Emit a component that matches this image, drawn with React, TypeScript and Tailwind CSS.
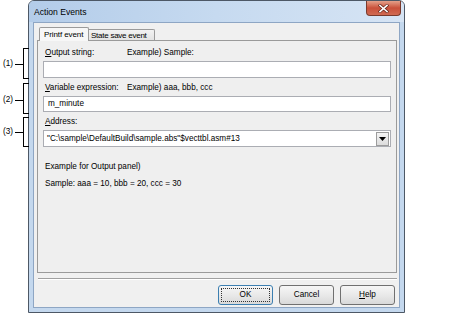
import React from "react";

function Callout({ top, height, tick, label }: { top: number; height: number; tick: number; label: string }) {
  return (
    <>
      <div
        className="absolute left-[23px] w-[6px] border-l border-t border-b border-black"
        style={{ top, height }}
      />
      <div className="absolute left-[15px] w-[8px] h-px bg-black" style={{ top: tick }} />
      <div className="absolute left-[3px] h-[12px] leading-[12px] text-black" style={{ top: tick - 6 }}>
        {label}
      </div>
    </>
  );
}

function Btn({ children, focus }: { children: React.ReactNode; focus?: boolean }) {
  return (
    <div
      className={
        "w-[55px] h-[20px] rounded-[3px] border flex items-center justify-center bg-gradient-to-b from-[#f6f6f6] via-[#e9e9e9] to-[#d9d9d9] " +
        (focus ? "border-[#3c7fb1]" : "border-[#707070]")
      }
    >
      {focus ? (
        <div className="w-[49px] h-[14px] border border-dotted border-[#333] flex items-center justify-center">
          {children}
        </div>
      ) : (
        children
      )}
    </div>
  );
}

export default function App() {
  return (
    <div
      className="relative w-[474px] h-[316px] bg-white overflow-hidden text-[8.2px] leading-[12px] text-black"
      style={{ fontFamily: '"Liberation Sans", Arial, sans-serif' }}
    >
      <Callout top={48} height={31} tick={64} label="(1)" />
      <Callout top={83} height={31} tick={100} label="(2)" />
      <Callout top={117} height={30} tick={132} label="(3)" />

      <div className="ml-[28px] w-[377px] h-[313px] border border-[#4d5866] rounded-t-[6px] bg-[#c4d8ee] flex flex-col">
        {/* title bar */}
        <div className="h-[21px] flex justify-between rounded-t-[5px] bg-gradient-to-r from-[#b3cce9] via-[#c6daf0] to-[#d6e4f4]">
          <div className="pl-[5px] pt-[5px] text-[8.6px] leading-[12px]">Action Events</div>
          <div className="mr-[3px] w-[35px] h-[15px] rounded-b-[4px] border border-t-0 border-[#7a3a2c] bg-gradient-to-b from-[#e4a08a] via-[#c9503a] to-[#d06a52] flex items-center justify-center">
            <svg width="11" height="9" viewBox="0 0 11 9">
              <path d="M2 1.5 L9 7.5 M9 1.5 L2 7.5" stroke="#6b2a1e" strokeWidth="3" strokeLinecap="square" />
              <path d="M2 1.5 L9 7.5 M9 1.5 L2 7.5" stroke="#ffffff" strokeWidth="1.6" strokeLinecap="square" />
            </svg>
          </div>
        </div>
        {/* client */}
        <div className="ml-[4px] w-[367px] h-[286px] border border-[#8ea6c4] bg-[#f0f0f0] flex flex-col">
          <div className="pt-[4px] flex flex-col">
            <div className="h-[13px] flex items-end pl-[5px]">
              <div className="relative z-10 w-[50px] h-[14px] -mb-px border border-b-0 border-[#9a9a9a] bg-[#f7f7f7] rounded-t-[2px] pl-[4px] leading-[13px] whitespace-nowrap text-[8px] tracking-[-0.1px]">
                Printf event
              </div>
              <div className="w-[66px] h-[11px] border border-l-0 border-b-0 border-[#9a9a9a] bg-gradient-to-b from-[#f2f2f2] to-[#e3e3e3] rounded-tr-[2px] pl-[2px] leading-[11px] whitespace-nowrap text-[8px] tracking-[-0.25px]">
                State save event
              </div>
            </div>
            <div className="ml-[3px] w-[360px] h-[233px] border border-[#9a9a9a] bg-[#efefef] px-[5px] flex flex-col">
              <div className="mt-[6px] h-[12px] flex pl-[2px] whitespace-nowrap">
                <div className="w-[82px]">
                  <span className="underline">O</span>utput string:
                </div>
                <div>Example) Sample:</div>
              </div>
              <div className="mt-[2px] h-[17px] border border-[#abadb3] bg-white" />
              <div className="mt-[4px] h-[12px] flex pl-[2px] whitespace-nowrap">
                <div className="w-[82px]">
                  <span className="underline">V</span>ariable expression:
                </div>
                <div>Example) aaa, bbb, ccc</div>
              </div>
              <div className="mt-[2px] h-[16px] border border-[#abadb3] bg-white pl-[4px] leading-[14px]">m_minute</div>
              <div className="mt-[4px] h-[12px] pl-[2px]">
                <span className="underline">A</span>ddress:
              </div>
              <div className="mt-[2px] h-[17px] border border-[#abadb3] bg-white flex items-center justify-between pl-[3px] pr-px">
                <div className="leading-[15px] whitespace-nowrap">"C:\sample\DefaultBuild\sample.abs"$vecttbl.asm#13</div>
                <div className="w-[13px] h-[14px] border border-[#9c9c9c] bg-gradient-to-b from-[#f4f4f4] to-[#dcdcdc] flex items-center justify-center">
                  <svg width="7" height="4" viewBox="0 0 7 4">
                    <polygon points="0,0 7,0 3.5,4" fill="#000" />
                  </svg>
                </div>
              </div>
              <div className="mt-[14px] h-[12px] pl-[2px]">Example for Output panel)</div>
              <div className="mt-[5px] h-[12px] pl-[2px] whitespace-nowrap">Sample: aaa = 10, bbb = 20, ccc = 30</div>
            </div>
            <div className="mt-[5px] ml-[4px] w-[359px] h-[2px] border-t border-[#a0a0a0] border-b border-b-white" />
            <div className="mt-[5px] h-[20px] flex justify-end gap-[6px] pr-[4px]">
              <Btn focus>OK</Btn>
              <Btn>Cancel</Btn>
              <Btn>
                <span>
                  <span className="underline">H</span>elp
                </span>
              </Btn>
            </div>
          </div>
        </div>
      </div>
    </div>
  );
}
